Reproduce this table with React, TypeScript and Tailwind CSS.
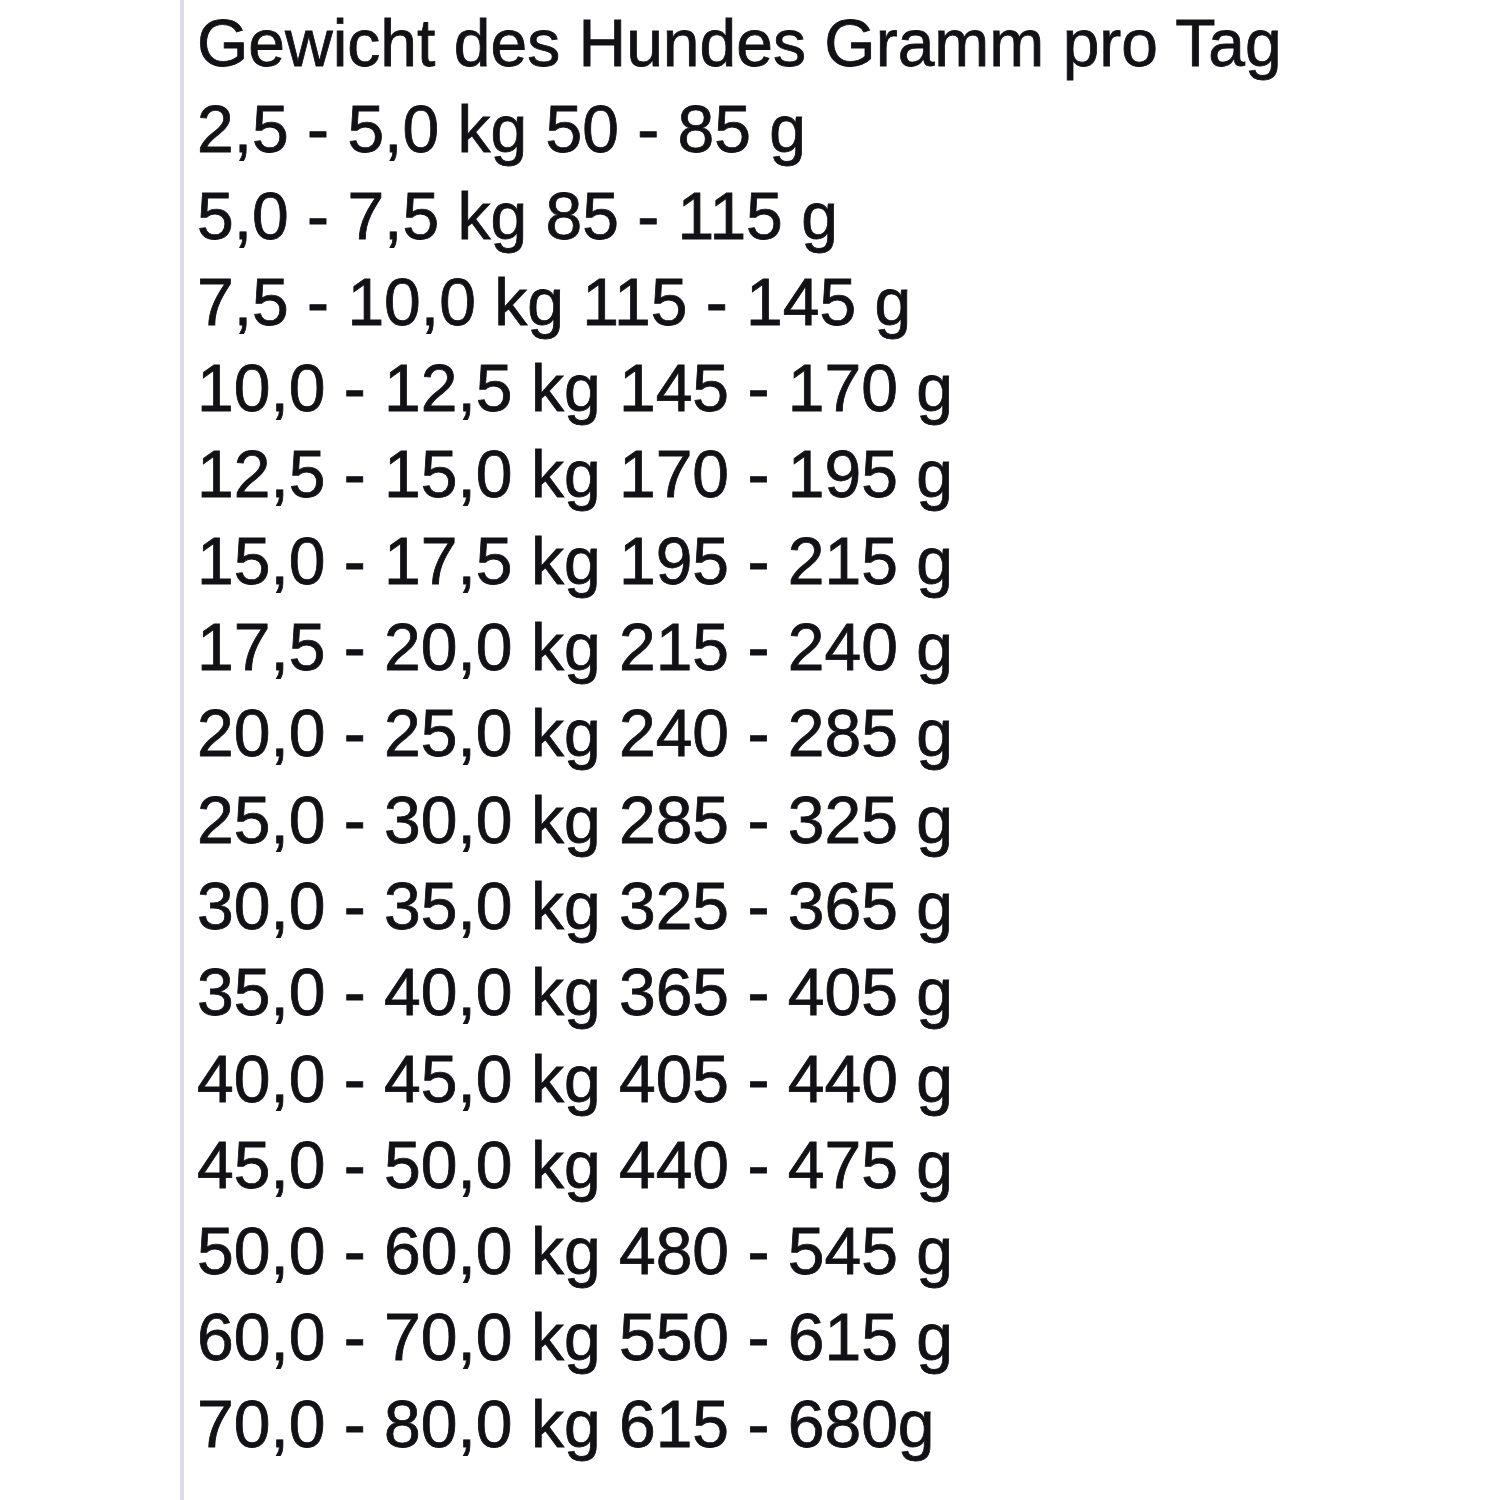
const rows = [
  "Gewicht des Hundes Gramm pro Tag",
  "2,5 - 5,0 kg 50 - 85 g",
  "5,0 - 7,5 kg 85 - 115 g",
  "7,5 - 10,0 kg 115 - 145 g",
  "10,0 - 12,5 kg 145 - 170 g",
  "12,5 - 15,0 kg 170 - 195 g",
  "15,0 - 17,5 kg 195 - 215 g",
  "17,5 - 20,0 kg 215 - 240 g",
  "20,0 - 25,0 kg 240 - 285 g",
  "25,0 - 30,0 kg 285 - 325 g",
  "30,0 - 35,0 kg 325 - 365 g",
  "35,0 - 40,0 kg 365 - 405 g",
  "40,0 - 45,0 kg 405 - 440 g",
  "45,0 - 50,0 kg 440 - 475 g",
  "50,0 - 60,0 kg 480 - 545 g",
  "60,0 - 70,0 kg 550 - 615 g",
  "70,0 - 80,0 kg 615 - 680g",
];

export default function App() {
  return (
    <div className="w-[1500px] h-[1500px] bg-white overflow-hidden">
      <div className="ml-[180px] h-full border-l-[4px] border-[#dcdcee] pl-[13px] font-['Liberation_Sans',Arial,sans-serif] text-[66px] leading-[86.3px] text-[#111116] [-webkit-text-stroke:0.8px_#111116]">
        {rows.map((r) => (
          <div key={r} className="whitespace-nowrap">{r}</div>
        ))}
      </div>
    </div>
  );
}
